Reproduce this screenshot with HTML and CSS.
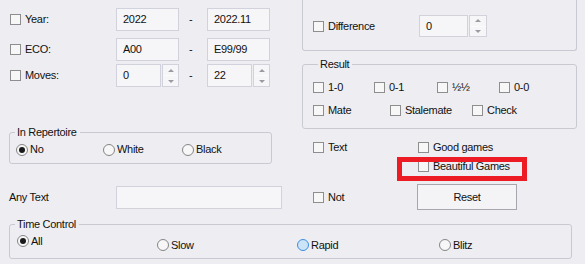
FILE: index.html
```html
<!DOCTYPE html>
<html>
<head>
<meta charset="utf-8">
<link rel="stylesheet" href="styles.css">
</head>
<body>
<div class="top">
  <div class="left">
    <div class="range r-year">
      <label class="chk"><span class="box"></span>Year:</label>
      <div class="field">2022</div>
      <span class="dash">-</span>
      <div class="field">2022.11</div>
    </div>
    <div class="range r-eco">
      <label class="chk"><span class="box"></span>ECO:</label>
      <div class="field">A00</div>
      <span class="dash">-</span>
      <div class="field">E99/99</div>
    </div>
    <div class="range r-moves">
      <label class="chk"><span class="box"></span>Moves:</label>
      <div class="spin"><div class="field">0</div><div class="btns"><span class="up"></span><span class="down"></span></div></div>
      <span class="dash">-</span>
      <div class="spin"><div class="field">22</div><div class="btns"><span class="up"></span><span class="down"></span></div></div>
    </div>
    <fieldset class="group rep">
      <legend>In Repertoire</legend>
      <div class="radios">
        <label class="opt w-no"><span class="radio on"></span>No</label>
        <label class="opt w-white"><span class="radio"></span>White</label>
        <label class="opt"><span class="radio"></span>Black</label>
      </div>
    </fieldset>
    <div class="anyrow">
      <span>Any Text</span>
      <div class="field"></div>
    </div>
  </div>
  <div class="right">
    <div class="diffbox">
      <label class="chk diff"><span class="box"></span>Difference</label>
      <div class="spin dspin"><div class="field">0</div><div class="btns"><span class="up"></span><span class="down"></span></div></div>
    </div>
    <fieldset class="group result">
      <legend>Result</legend>
      <div class="rrow rrow1">
        <label class="chk c1"><span class="box"></span>1-0</label>
        <label class="chk c2"><span class="box"></span>0-1</label>
        <label class="chk c3"><span class="box"></span>½½</label>
        <label class="chk"><span class="box"></span>0-0</label>
      </div>
      <div class="rrow rrow2">
        <label class="chk m1"><span class="box"></span>Mate</label>
        <label class="chk m2"><span class="box"></span>Stalemate</label>
        <label class="chk"><span class="box"></span>Check</label>
      </div>
    </fieldset>
    <div class="opts">
      <label class="chk"><span class="box"></span>Text</label>
      <label class="chk"><span class="box"></span>Good games</label>
      <span></span>
      <label class="chk marked"><span class="box"></span>Beautiful Games<span class="highlight"></span></label>
      <label class="chk notchk"><span class="box"></span>Not</label>
      <button class="btn">Reset</button>
    </div>
  </div>
</div>
<fieldset class="group tc">
  <legend>Time Control</legend>
  <div class="tcrow">
    <label class="opt t-all"><span class="radio on"></span>All</label>
    <label class="opt t-slow"><span class="radio"></span>Slow</label>
    <label class="opt t-rapid"><span class="radio blue"></span>Rapid</label>
    <label class="opt t-blitz"><span class="radio"></span>Blitz</label>
  </div>
</fieldset>
</body>
</html>
```
FILE: styles.css
```css
html, body {
  margin: 0;
  padding: 0;
}
body {
  background: #eeeef2;
  font-family: "Liberation Sans", Arial, sans-serif;
  font-size: 11px;
  line-height: 13px;
  letter-spacing: -0.3px;
  color: #111111;
  width: 585px;
  height: 264px;
  overflow: hidden;
}
.top {
  display: flex;
}
.left {
  width: 290px;
  box-sizing: border-box;
  padding: 8px 0 0 9px;
}
.right {
  width: 275px;
  margin-left: 12px;
}

/* checkbox & radio */
.chk {
  display: flex;
  align-items: center;
  white-space: nowrap;
}
.box {
  width: 11px;
  height: 11px;
  box-sizing: border-box;
  border: 1px solid #8e8e8e;
  background: #f7f7f8;
  margin-right: 4px;
  flex: none;
}
.opt {
  display: flex;
  align-items: center;
  white-space: nowrap;
}
.radio {
  width: 12px;
  height: 12px;
  box-sizing: border-box;
  border: 1px solid #858585;
  border-radius: 50%;
  background: #f7f7f8;
  margin-right: 2px;
  flex: none;
  display: flex;
  align-items: center;
  justify-content: center;
}
.radio.on::after {
  content: "";
  width: 6px;
  height: 6px;
  border-radius: 50%;
  background: #1a1a1a;
}
.radio.blue {
  border-color: #3d8fe0;
  background: #cce4f7;
}

/* fields */
.field {
  height: 23px;
  box-sizing: border-box;
  border: 1px solid #d2d2dc;
  background: #f6f6f9;
  padding-left: 6px;
  display: flex;
  align-items: center;
}
.spin {
  display: flex;
  height: 23px;
}
.spin .field {
  flex: 1;
  height: 100%;
}
.btns {
  width: 17px;
  margin-left: 1px;
  box-sizing: border-box;
  border: 1px solid #d2d2dc;
  background: #f6f6f9;
  display: flex;
  flex-direction: column;
}
.btns span {
  flex: 1;
  display: flex;
  align-items: center;
  justify-content: center;
}
.btns .up {
  border-bottom: 1px solid #fbfbfd;
}
.btns .up::after {
  content: "";
  border-left: 3px solid transparent;
  border-right: 3px solid transparent;
  border-bottom: 3px solid #9a9aa2;
}
.btns .down::after {
  content: "";
  border-left: 3px solid transparent;
  border-right: 3px solid transparent;
  border-top: 3px solid #9a9aa2;
}

/* left rows */
.range {
  display: grid;
  grid-template-columns: 107px 63px 28px 63px;
  height: 23px;
  align-items: center;
}
.range .chk {
  padding-left: 1px;
}
.r-eco {
  margin-top: 7px;
}
.r-moves {
  margin-top: 3px;
}
.dash {
  padding-left: 10px;
}

/* group boxes */
.group {
  margin: 0;
  padding: 0;
  min-width: 0;
  border: 1px solid #c9c9d4;
  border-radius: 3px;
}
.group legend {
  margin-left: 5px;
  padding: 0 3px 0 2px;
  line-height: 13px;
}
.rep {
  margin-top: 39px;
  width: 263px;
  box-sizing: border-box;
}
.radios {
  display: flex;
  height: 13px;
  align-items: center;
  padding: 4px 0 7px 6px;
}
.w-no {
  width: 87px;
}
.w-white {
  width: 79px;
}
.anyrow {
  display: grid;
  grid-template-columns: 107px 166px;
  align-items: center;
  margin-top: 22px;
}

/* right column */
.diffbox {
  height: 51px;
  box-sizing: border-box;
  border: 1px solid #c9c9d4;
  border-top: none;
  border-radius: 0 0 3px 3px;
  padding: 15px 0 0 10px;
  display: flex;
  align-items: flex-start;
}
.diff {
  width: 106px;
  height: 22px;
}
.dspin {
  width: 68px;
  height: 22px;
}
.dspin .btns {
  width: 18px;
}
.result {
  margin-top: 7px;
  padding: 9px 0 11px 10px;
}
.rrow {
  display: flex;
  height: 14px;
  align-items: center;
}
.rrow2 {
  margin-top: 9px;
}
.c1 { width: 61px; }
.c2 { width: 63px; }
.c3 { width: 62px; }
.m1 { width: 77px; }
.m2 { width: 82px; }

.opts {
  display: grid;
  grid-template-columns: 105px 100px;
  grid-template-rows: 14px 14px 32px;
  row-gap: 5px;
  margin: 11px 0 0 11px;
  align-items: center;
}
.notchk {
  align-self: end;
  margin-bottom: 6px;
}
.marked {
  position: relative;
}
.highlight {
  position: absolute;
  left: -21px;
  top: -3px;
  width: 130px;
  height: 24px;
  box-sizing: border-box;
  border: 5px solid #ed1c24;
}
.btn {
  align-self: end;
  width: 100px;
  height: 26px;
  margin-left: -1px;
  box-sizing: border-box;
  border: 1px solid #a7a7ad;
  background: #f4f4f6;
  font: inherit;
  letter-spacing: inherit;
  color: inherit;
  padding: 0;
}

/* time control */
.tc {
  margin: 8px 0 0 9px;
  width: 563px;
  box-sizing: border-box;
}
.tcrow {
  display: flex;
  align-items: flex-start;
  padding: 4px 0 7px 7px;
}
.tcrow .opt {
  height: 12px;
  margin-top: 4px;
}
.tcrow .t-all {
  margin-top: 0;
  margin-bottom: 4px;
}
.t-all, .t-slow { width: 140px; }
.t-rapid { width: 142px; }
```
